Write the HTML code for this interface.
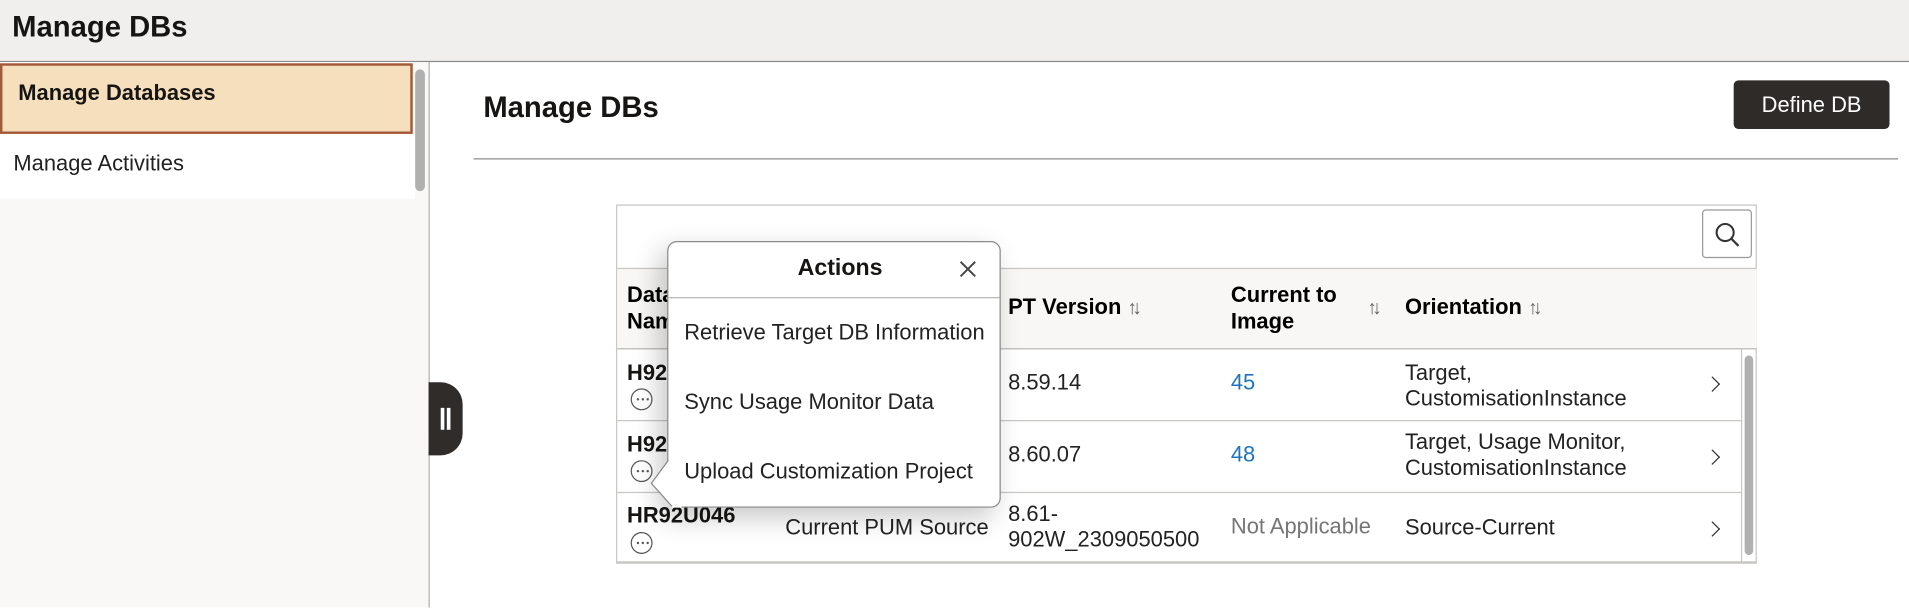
<!DOCTYPE html>
<html><head><meta charset="utf-8">
<style>
html,body{margin:0;padding:0;width:1909px;height:607px;overflow:hidden;background:#fff;}
#w{position:absolute;left:0;top:0;width:1568px;height:499px;transform:scale(1.21747);transform-origin:0 0;font-family:"Liberation Sans",Arial,sans-serif;color:#161513;}
.a{position:absolute;}
.t{font-size:18px;white-space:nowrap;}
.b{font-weight:bold;}
.hd{font-size:18px;font-weight:bold;color:#000;line-height:22px;white-space:nowrap;}
.srt{color:#666;font-weight:normal;font-size:16px;letter-spacing:-4px;}
.dots{position:absolute;width:18px;height:18px;border:1.2px solid #555;border-radius:50%;box-sizing:border-box;}
.dots:after{content:"";position:absolute;left:3.5px;top:7.3px;width:2px;height:2px;border-radius:1px;background:#555;box-shadow:4px 0 0 #555,8px 0 0 #555;}
.chev{position:absolute;width:8px;height:8px;border-right:1.6px solid #333;border-top:1.6px solid #333;transform:rotate(45deg);}
</style></head><body><div id="w">
<div class="a" style="left:0;top:0;width:1568px;height:50px;background:#f0efed;border-bottom:1px solid #8a8a8a;"></div>
<div class="a b" style="left:10px;top:9px;font-size:24px;">Manage DBs</div>
<div class="a" style="left:0;top:51px;width:352px;height:448px;background:#f9f8f6;border-right:1px solid #b0b0b0;"></div>
<div class="a" style="left:0;top:51px;width:341px;height:112px;background:#fff;"></div>
<div class="a" style="left:0;top:52px;width:339px;height:58px;background:#f5dfbd;border:2.5px solid #a3593a;box-sizing:border-box;"></div>
<div class="a t b" style="left:15px;top:66px;">Manage Databases</div>
<div class="a t" style="left:11px;top:124px;color:#222;">Manage Activities</div>
<div class="a" style="left:341px;top:57px;width:8px;height:100px;background:#b0b0b0;border-radius:4px;"></div>
<div class="a" style="left:352px;top:314px;width:28px;height:60px;background:#2f2c2a;border-radius:0 18px 18px 0;"></div>
<div class="a" style="left:362px;top:335px;width:2.5px;height:18px;background:#fff;"></div>
<div class="a" style="left:367px;top:335px;width:2.5px;height:18px;background:#fff;"></div>
<div class="a b" style="left:397px;top:75px;font-size:24px;">Manage DBs</div>
<div class="a" style="left:1424px;top:66px;width:128px;height:40px;background:#2e2b29;border-radius:4px;color:#fff;font-size:18px;text-align:center;line-height:40px;">Define DB</div>
<div class="a" style="left:389px;top:130px;width:1170px;height:1px;background:#8a8a8a;"></div>
<div class="a" style="left:506px;top:168px;width:937px;height:295px;border:1px solid #c8c6c3;border-bottom:2px solid #c8c6c3;box-sizing:border-box;background:#fff;"></div>
<div class="a" style="left:1398px;top:172px;width:41px;height:40px;border:1px solid #999;border-radius:3px;box-sizing:border-box;background:#fff;"></div>
<svg class="a" style="left:1407px;top:181px;" width="24" height="24" viewBox="0 0 24 24"><circle cx="10" cy="10" r="7" fill="none" stroke="#333" stroke-width="1.7"/><line x1="15" y1="15" x2="21" y2="21" stroke="#333" stroke-width="1.8"/></svg>
<div class="a" style="left:507px;top:220px;width:936px;height:65px;background:#f8f7f5;border-top:1px solid #c8c6c3;border-bottom:1px solid #b8b6b3;"></div>
<div class="a hd" style="left:515px;top:231px;">Database<br>Name</div>
<div class="a hd" style="left:828px;top:241px;">PT Version <span class="srt">↑↓</span></div>
<div class="a hd" style="left:1011px;top:231px;">Current to<br>Image</div>
<div class="a hd" style="left:1123px;top:241px;"><span class="srt">↑↓</span></div>
<div class="a hd" style="left:1154px;top:241px;">Orientation <span class="srt">↑↓</span></div>
<div class="a" style="left:507px;top:345px;width:923px;height:1px;background:#c8c6c3;"></div>
<div class="a" style="left:507px;top:404px;width:923px;height:1px;background:#c8c6c3;"></div>
<div class="a" style="left:1430px;top:286px;width:1px;height:177px;background:#c8c6c3;"></div>
<div class="a" style="left:1433px;top:292px;width:7px;height:164px;background:#b0b0b0;border-radius:4px;"></div>
<div class="a t b" style="left:515px;top:296px;">H92</div>
<div class="dots" style="left:518px;top:319px;"></div>
<div class="a t" style="left:828px;top:304px;color:#222;">8.59.14</div>
<div class="a t" style="left:1011px;top:304px;color:#1f74bd;">45</div>
<div class="a t" style="left:1154px;top:296px;line-height:21px;color:#222;">Target,<br>CustomisationInstance</div>
<div class="chev" style="left:1402px;top:311px;"></div>
<div class="a t b" style="left:515px;top:355px;">H92</div>
<div class="dots" style="left:518px;top:378px;"></div>
<div class="a t" style="left:828px;top:363px;color:#222;">8.60.07</div>
<div class="a t" style="left:1011px;top:363px;color:#1f74bd;">48</div>
<div class="a t" style="left:1154px;top:353px;line-height:21px;color:#222;">Target, Usage Monitor,<br>CustomisationInstance</div>
<div class="chev" style="left:1402px;top:371px;"></div>
<div class="a t b" style="left:515px;top:413px;">HR92U046</div>
<div class="dots" style="left:518px;top:437px;"></div>
<div class="a t" style="left:645px;top:423px;color:#222;">Current PUM Source</div>
<div class="a t" style="left:828px;top:412px;line-height:21px;color:#222;">8.61-<br>902W_2309050500</div>
<div class="a t" style="left:1011px;top:422px;color:#757575;">Not Applicable</div>
<div class="a t" style="left:1154px;top:423px;color:#222;">Source-Current</div>
<div class="chev" style="left:1402px;top:430px;"></div>
<div class="a" style="left:548px;top:198px;width:274px;height:219px;background:#fff;border:1px solid #8a8a8a;border-radius:8px;box-sizing:border-box;box-shadow:-6px 8px 22px rgba(0,0,0,0.22);"></div>
<svg class="a" style="left:530px;top:370px;" width="30" height="50" viewBox="0 0 30 50"><polygon points="19,8 5,27 22,47 30,47 30,8" fill="#fff"/><polyline points="19,8 5,27 22,46" fill="none" stroke="#8a8a8a" stroke-width="1"/></svg>
<div class="a b" style="left:548px;top:210px;width:284px;text-align:center;font-size:19px;">Actions</div>
<svg class="a" style="left:787px;top:213px;" width="16" height="16" viewBox="0 0 16 16"><path d="M2 2L14 14M14 2L2 14" stroke="#444" stroke-width="1.6"/></svg>
<div class="a" style="left:549px;top:244px;width:272px;height:1px;background:#b8b6b3;"></div>
<div class="a t" style="left:562px;top:263px;color:#222;">Retrieve Target DB Information</div>
<div class="a t" style="left:562px;top:320px;color:#222;">Sync Usage Monitor Data</div>
<div class="a t" style="left:562px;top:377px;color:#222;">Upload Customization Project</div>
</div></body></html>
